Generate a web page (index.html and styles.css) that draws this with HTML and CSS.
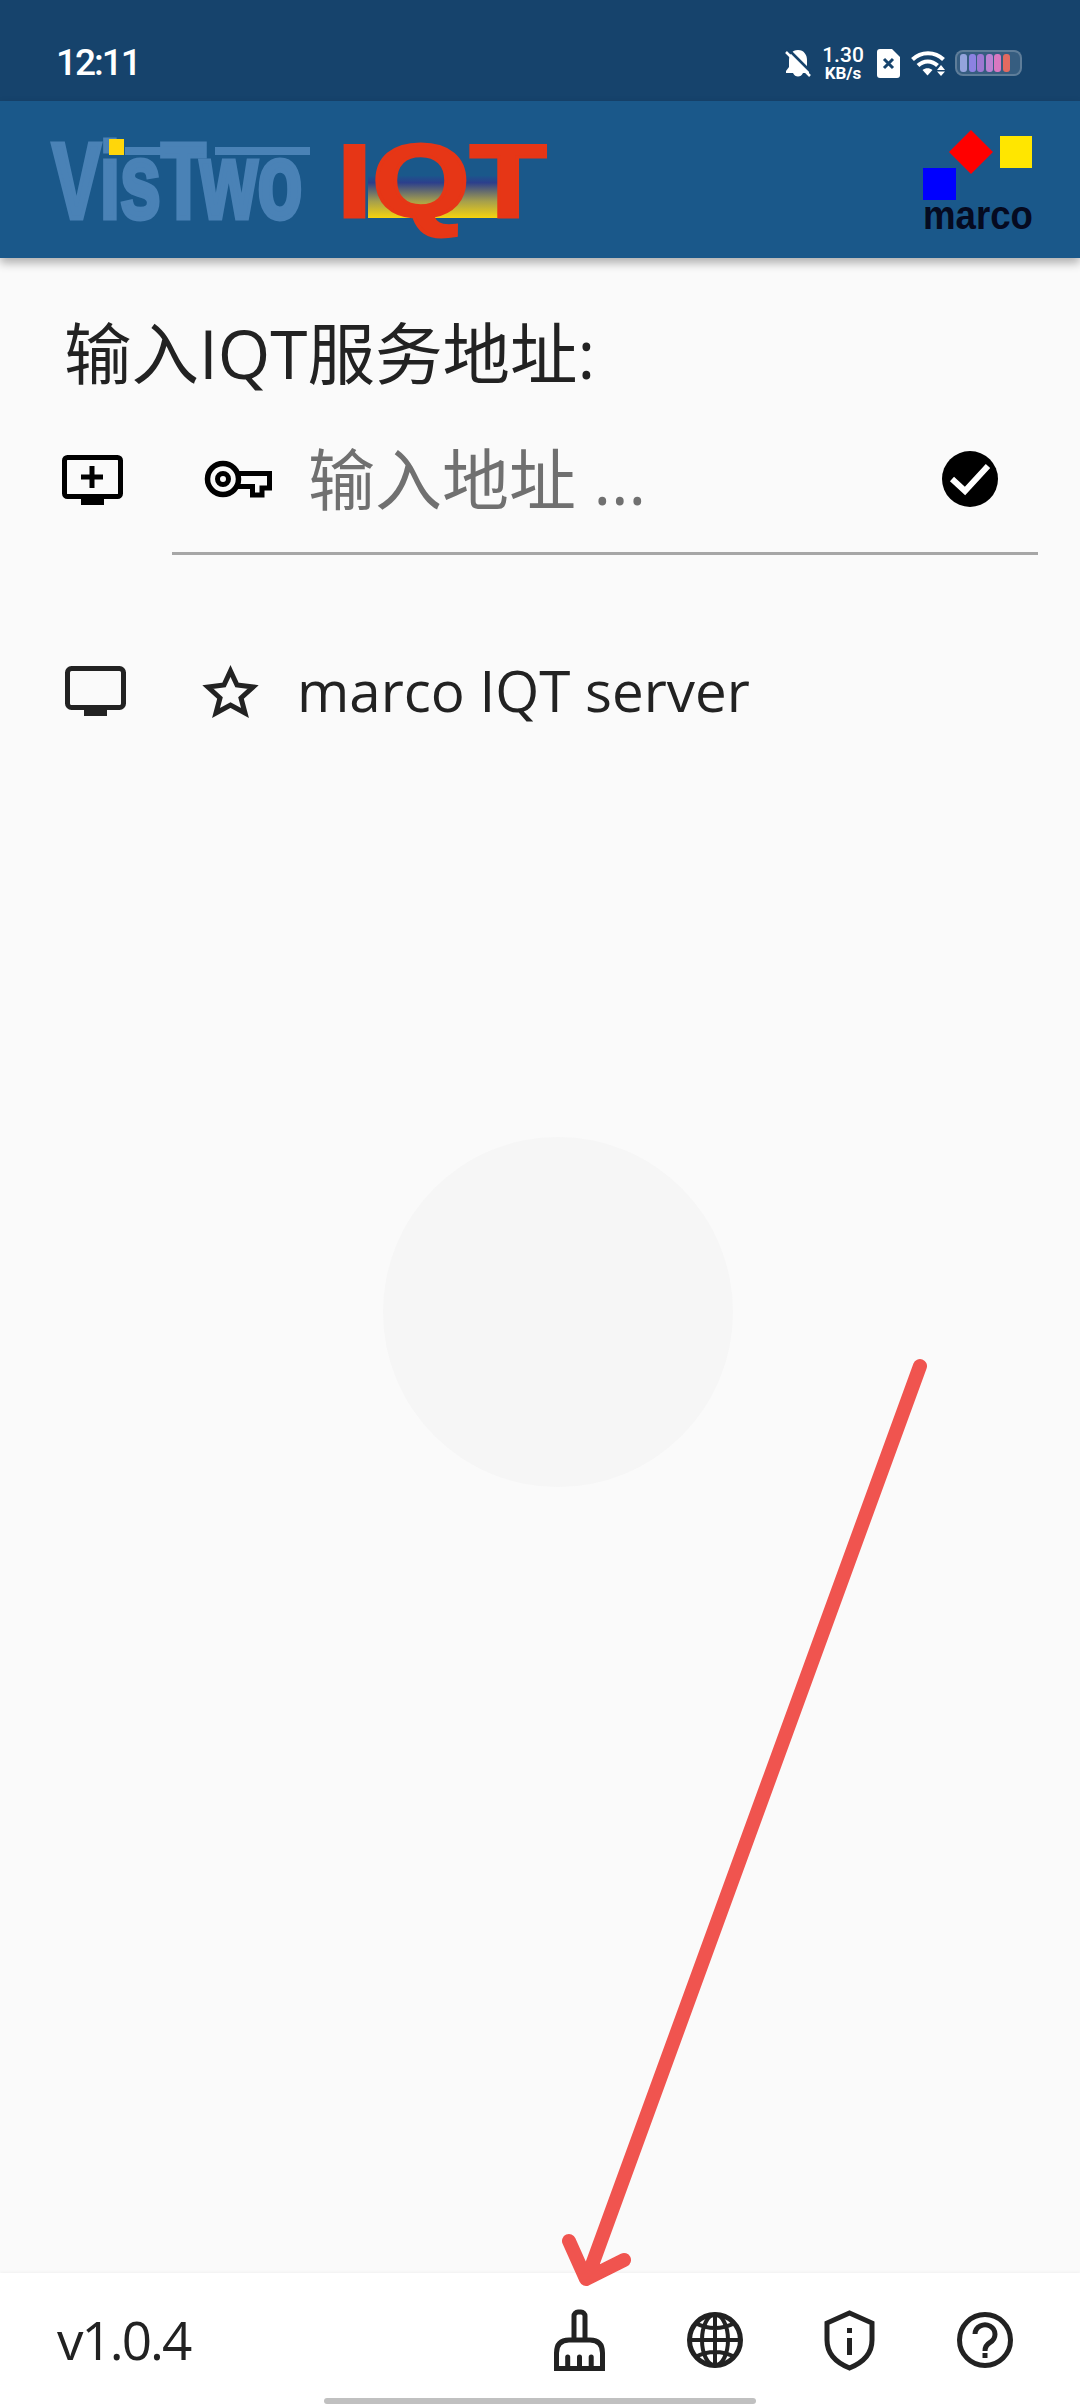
FILE: index.html
```html
<!DOCTYPE html>
<html lang="zh">
<head>
<meta charset="utf-8">
<title>IQT</title>
<link rel="stylesheet" href="styles.css">
</head>
<body>
<div class="page">
  <div class="status">
    <span class="time">12:11</span>
    <div class="status-icons">
      <svg class="ic-bell" width="26" height="28" viewBox="0 0 26 28"><path fill="#fff" d="M13 1C7 1 4 6 4 11V18L1 22V24H8C9 26.500 11 27.500 13 27.500C15 27.500 17 26.500 18 24H24V22L22 18V11C22 6 19 1 13 1Z"/><path stroke="#16436c" stroke-width="2.500" d="M3 0 27 24"/><path stroke="#fff" stroke-width="2.500" d="M1 3 25 27"/></svg>
      <div class="speed"><span class="speed-num">1.30</span><span class="speed-unit">KB/s</span></div>
      <svg class="ic-sim" width="23" height="29" viewBox="0 0 23 29"><path fill="#fff" d="M3 0H15L23 8V26A3 3 0 0 1 20 29H3A3 3 0 0 1 0 26V3A3 3 0 0 1 3 0Z"/><path stroke="#16436c" stroke-width="3" d="M7 10 16 19M16 10 7 19"/></svg>
      <svg class="ic-wifi" width="35" height="26" viewBox="0 0 35 26"><g fill="none" stroke="#fff" stroke-width="4"><path d="M1.500 9.500C10 1 24 1 32.500 9.500"/><path d="M7 15.500C12.500 10 21 10 26.500 15.500"/></g><path fill="#fff" d="M11.500 20C14.500 17.500 18.500 17.500 21.500 20L16.500 25.500Z"/><path fill="#fff" d="M30 15 34 20H26ZM26 21.500H34L30 26Z"/></svg>
      <div class="battery">
        <span class="cell cell-1"></span><span class="cell cell-2"></span><span class="cell cell-3"></span><span class="cell cell-4"></span><span class="cell cell-5"></span><span class="cell cell-6"></span>
      </div>
    </div>
  </div>

  <header class="appbar">
    <svg class="logo-main" width="502" height="157" viewBox="50 101 502 157">
      <defs>
        <linearGradient id="iqtfill" x1="0" y1="0" x2="0" y2="1">
          <stop offset="0" stop-color="#1c558c"/>
          <stop offset="0.16" stop-color="#2c3f8c"/>
          <stop offset="0.6" stop-color="#a59f4c"/>
          <stop offset="1" stop-color="#f6d40e"/>
        </linearGradient>
      </defs>
      <text class="logo-vis" transform="translate(52 218) scale(0.68 1)">VisTwo</text>
      <rect x="125" y="147" width="40" height="8" fill="#4a82b6"/>
      <rect x="215" y="147" width="95" height="8" fill="#4a82b6"/>
      <rect x="109" y="139" width="15" height="16" fill="#ffd60a"/>
      <rect x="368" y="176" width="130" height="42" fill="url(#iqtfill)"/>
      <text class="logo-iqt" transform="translate(337 217) scale(1.21 1)">IQT</text>
    </svg>
    <svg class="logo-marco" width="112" height="157" viewBox="925 101 112 157">
      <rect x="1002" y="136" width="32" height="32" fill="#ffe600"/>
      <path fill="#ff0000" d="M973 130 995 152 973 174 951 152Z"/>
      <rect x="925" y="168" width="33" height="32" fill="#0000ff"/>
      <text class="logo-marco-text" x="925" y="229" textLength="110" lengthAdjust="spacingAndGlyphs">marco</text>
    </svg>
  </header>

  <main class="content">
    <h1 class="title">输入IQT服务地址:</h1>
    <div class="address-row">
      <svg class="ic-add" width="61" height="50" viewBox="0 0 61 50">
        <rect x="2.500" y="2.500" width="56" height="39" rx="3" fill="none" stroke="#000" stroke-width="5"/>
        <rect x="19" y="41" width="23" height="9" fill="#000"/>
        <path stroke="#000" stroke-width="5" d="M19 22H41M30 11V33"/>
      </svg>
      <div class="address-field">
        <svg class="ic-key" width="67" height="38" viewBox="0 0 67 38">
          <g fill="none" stroke="#000">
            <circle cx="18" cy="19" r="15.500" stroke-width="5.500"/>
            <circle cx="18" cy="19" r="5.500" stroke-width="5"/>
            <path stroke-width="5" d="M32 13.500H64.500V28H57V35H47.500V26.500H31"/>
          </g>
        </svg>
        <span class="placeholder">输入地址 ...</span>
        <svg class="ic-check" width="56" height="56" viewBox="0 0 56 56">
          <circle cx="28" cy="28" r="28" fill="#000"/>
          <path fill="none" stroke="#fff" stroke-width="6" d="M10 28 23 40 46 15"/>
        </svg>
      </div>
    </div>
    <div class="server-row">
      <svg class="ic-monitor" width="61" height="50" viewBox="0 0 61 50">
        <rect x="2.500" y="2.500" width="56" height="39" rx="4" fill="none" stroke="#222" stroke-width="5"/>
        <rect x="19" y="41" width="23" height="9" fill="#222"/>
      </svg>
      <svg class="ic-star" width="55" height="52" viewBox="0 0 55 52">
        <path fill="none" stroke="#222" stroke-width="5" d="M27.500 6 34 20 50 22 38 33 42 48 27.500 40 13 48 17 33 5 22 21 20Z"/>
      </svg>
      <span class="server-name">marco IQT server</span>
    </div>
  </main>

  <footer class="footer">
    <div class="footer-row">
      <span class="version">v1.0.4</span>
      <svg class="ic-broom" width="51" height="62" viewBox="0 0 51 62">
        <g fill="none" stroke="#222" stroke-width="5">
          <path d="M20 31V7A4 4 0 0 1 24 3H27A4 4 0 0 1 31 7V31"/>
          <path d="M2.500 59V44Q2.500 31 15 31H36Q48.500 31 48.500 44V59"/>
          <path d="M0 59.500H51"/>
          <path stroke-linecap="round" d="M13.700 48V58M25.500 48V58M37.200 48V58"/>
        </g>
      </svg>
      <svg class="ic-globe" width="56" height="56" viewBox="0 0 56 56">
        <g fill="none" stroke="#222">
          <circle cx="28" cy="28" r="25.500" stroke-width="5"/>
          <ellipse cx="28" cy="28" rx="13" ry="25.500" stroke-width="4"/>
          <path stroke-width="4" d="M2 28H54M28 2V54M8 11Q28 21 48 11M8 45Q28 35 48 45"/>
        </g>
      </svg>
      <svg class="ic-shield" width="51" height="61" viewBox="0 0 51 61">
        <path fill="none" stroke="#222" stroke-width="5" d="M25.500 3 48 13V30C48 44 38 53 25.500 58 13 53 3 44 3 30V13Z"/>
        <path fill="#222" d="M23 18H28V23H23ZM23 28H28V45H23Z"/>
      </svg>
      <svg class="ic-help" width="56" height="56" viewBox="0 0 56 56">
        <circle cx="28" cy="28" r="25.500" fill="none" stroke="#222" stroke-width="5"/>
        <path fill="none" stroke="#222" stroke-width="5" d="M18 22A10 9.500 0 1 1 33 30.500Q28 33.500 28 39"/>
        <rect x="25.500" y="41" width="5" height="5" fill="#222"/>
      </svg>
    </div>
    <div class="home-row"><span class="home-bar"></span></div>
  </footer>

  <div class="touch-circle"></div>
  <svg class="arrow" width="400" height="960" viewBox="540 1340 400 960">
    <path fill="none" stroke="#f0544f" stroke-width="14" stroke-linecap="round" stroke-linejoin="round" d="M920 1366 588 2276M569 2241 586 2279 624 2260"/>
  </svg>
</div>
</body>
</html>
```
FILE: styles.css
```css
* { box-sizing: border-box; }
html, body { margin: 0; padding: 0; }
body { background: #fafafa; font-family: "Open Sans", "Noto Sans CJK SC", sans-serif; color: #222; }
svg { display: block; flex: none; overflow: visible; }

.page { position: relative; width: 1080px; height: 2408px; display: flex; flex-direction: column; overflow: hidden; }

.status { height: 101px; flex: none; background: #16436c; color: #fff; display: flex; align-items: center; padding: 25px 57px 0 56px; }
.time { font-family: Roboto, sans-serif; font-weight: 500; font-size: 37px; line-height: 40px; letter-spacing: -2px; }
.status-icons { margin-left: auto; margin-right: 1px; display: flex; align-items: center; }
.speed { margin-left: 10px; width: 44px; display: flex; flex-direction: column; align-items: center; font-family: Roboto, sans-serif; font-weight: 500; }
.speed-num { font-size: 21px; line-height: 20px; }
.speed-unit { font-size: 17px; line-height: 17px; font-weight: 700; }
.ic-sim { margin-left: 12px; }
.ic-wifi { margin-left: 11px; }
.battery { margin-left: 9px; width: 67px; height: 26px; border-radius: 8px; background: rgba(255,255,255,.14); border: 2px solid rgba(255,255,255,.2); display: flex; align-items: center; gap: 1.500px; padding: 0 3px; }
.cell { width: 7px; height: 18px; border-radius: 3px; }
.cell-1 { background: #94a4dc; }
.cell-2 { background: #8c82e2; }
.cell-3 { background: #9c78d2; }
.cell-4 { background: #ba82d2; }
.cell-5 { background: #da78c0; }
.cell-6 { background: #e26a60; }

.appbar { height: 157px; flex: none; background: #1a588a; box-shadow: 0 5px 9px rgba(0,0,0,.3); padding: 0 45px 0 50px; display: flex; justify-content: space-between; align-items: flex-start; position: relative; }
.logo-vis { font-family: "Liberation Sans", sans-serif; font-weight: 700; font-size: 108px; fill: #4a82b6; stroke: #4a82b6; stroke-width: 5px; }
.logo-iqt { font-family: "Liberation Sans", sans-serif; font-weight: 700; font-size: 104px; fill: #e63616; stroke: #e63616; stroke-width: 3px; }
.logo-marco-text { font-family: "Liberation Sans", sans-serif; font-weight: 700; font-size: 41px; fill: #050a20; }

.content { flex: 1; display: flex; flex-direction: column; }
.title { margin: 0; padding: 55px 0 0 64px; font-size: 67.500px; line-height: 80px; font-weight: 400; color: #222; white-space: nowrap; }
.address-row { margin-top: 12px; height: 150px; display: flex; align-items: center; padding-left: 62px; }
.address-field { margin-left: 49px; width: 866px; height: 150px; border-bottom: 3px solid #a6a6a6; display: flex; align-items: center; padding: 0 40px 0 33px; }
.placeholder { margin-left: 36px; font-size: 67px; line-height: 80px; color: #707070; white-space: nowrap; }
.ic-check { margin-left: auto; }
.server-row { margin-top: 96px; height: 80px; display: flex; align-items: center; padding-left: 65px; }
.ic-star { margin-left: 77px; }
.server-name { margin-left: 39px; font-size: 56.500px; line-height: 80px; color: #222; white-space: nowrap; }

.footer { height: 135px; flex: none; background: #fff; display: flex; flex-direction: column; box-shadow: 0 -1px 3px rgba(0,0,0,.04); position: relative; }
.footer-row { height: 125px; padding: 9px 67px 0 57px; display: flex; align-items: center; }
.version { margin-right: auto; font-size: 53px; line-height: 60px; letter-spacing: -2px; color: #222; }
.ic-globe { margin-left: 82px; }
.ic-shield { margin-left: 81px; }
.ic-help { margin-left: 82px; }
.home-row { height: 10px; display: flex; justify-content: center; }
.home-bar { width: 432px; height: 6px; border-radius: 3px; background: #c0c0c0; }

.touch-circle { position: absolute; left: 383px; top: 1137px; width: 350px; height: 350px; border-radius: 50%; background: #f6f6f6; }
.arrow { position: absolute; left: 540px; top: 1340px; }
```
